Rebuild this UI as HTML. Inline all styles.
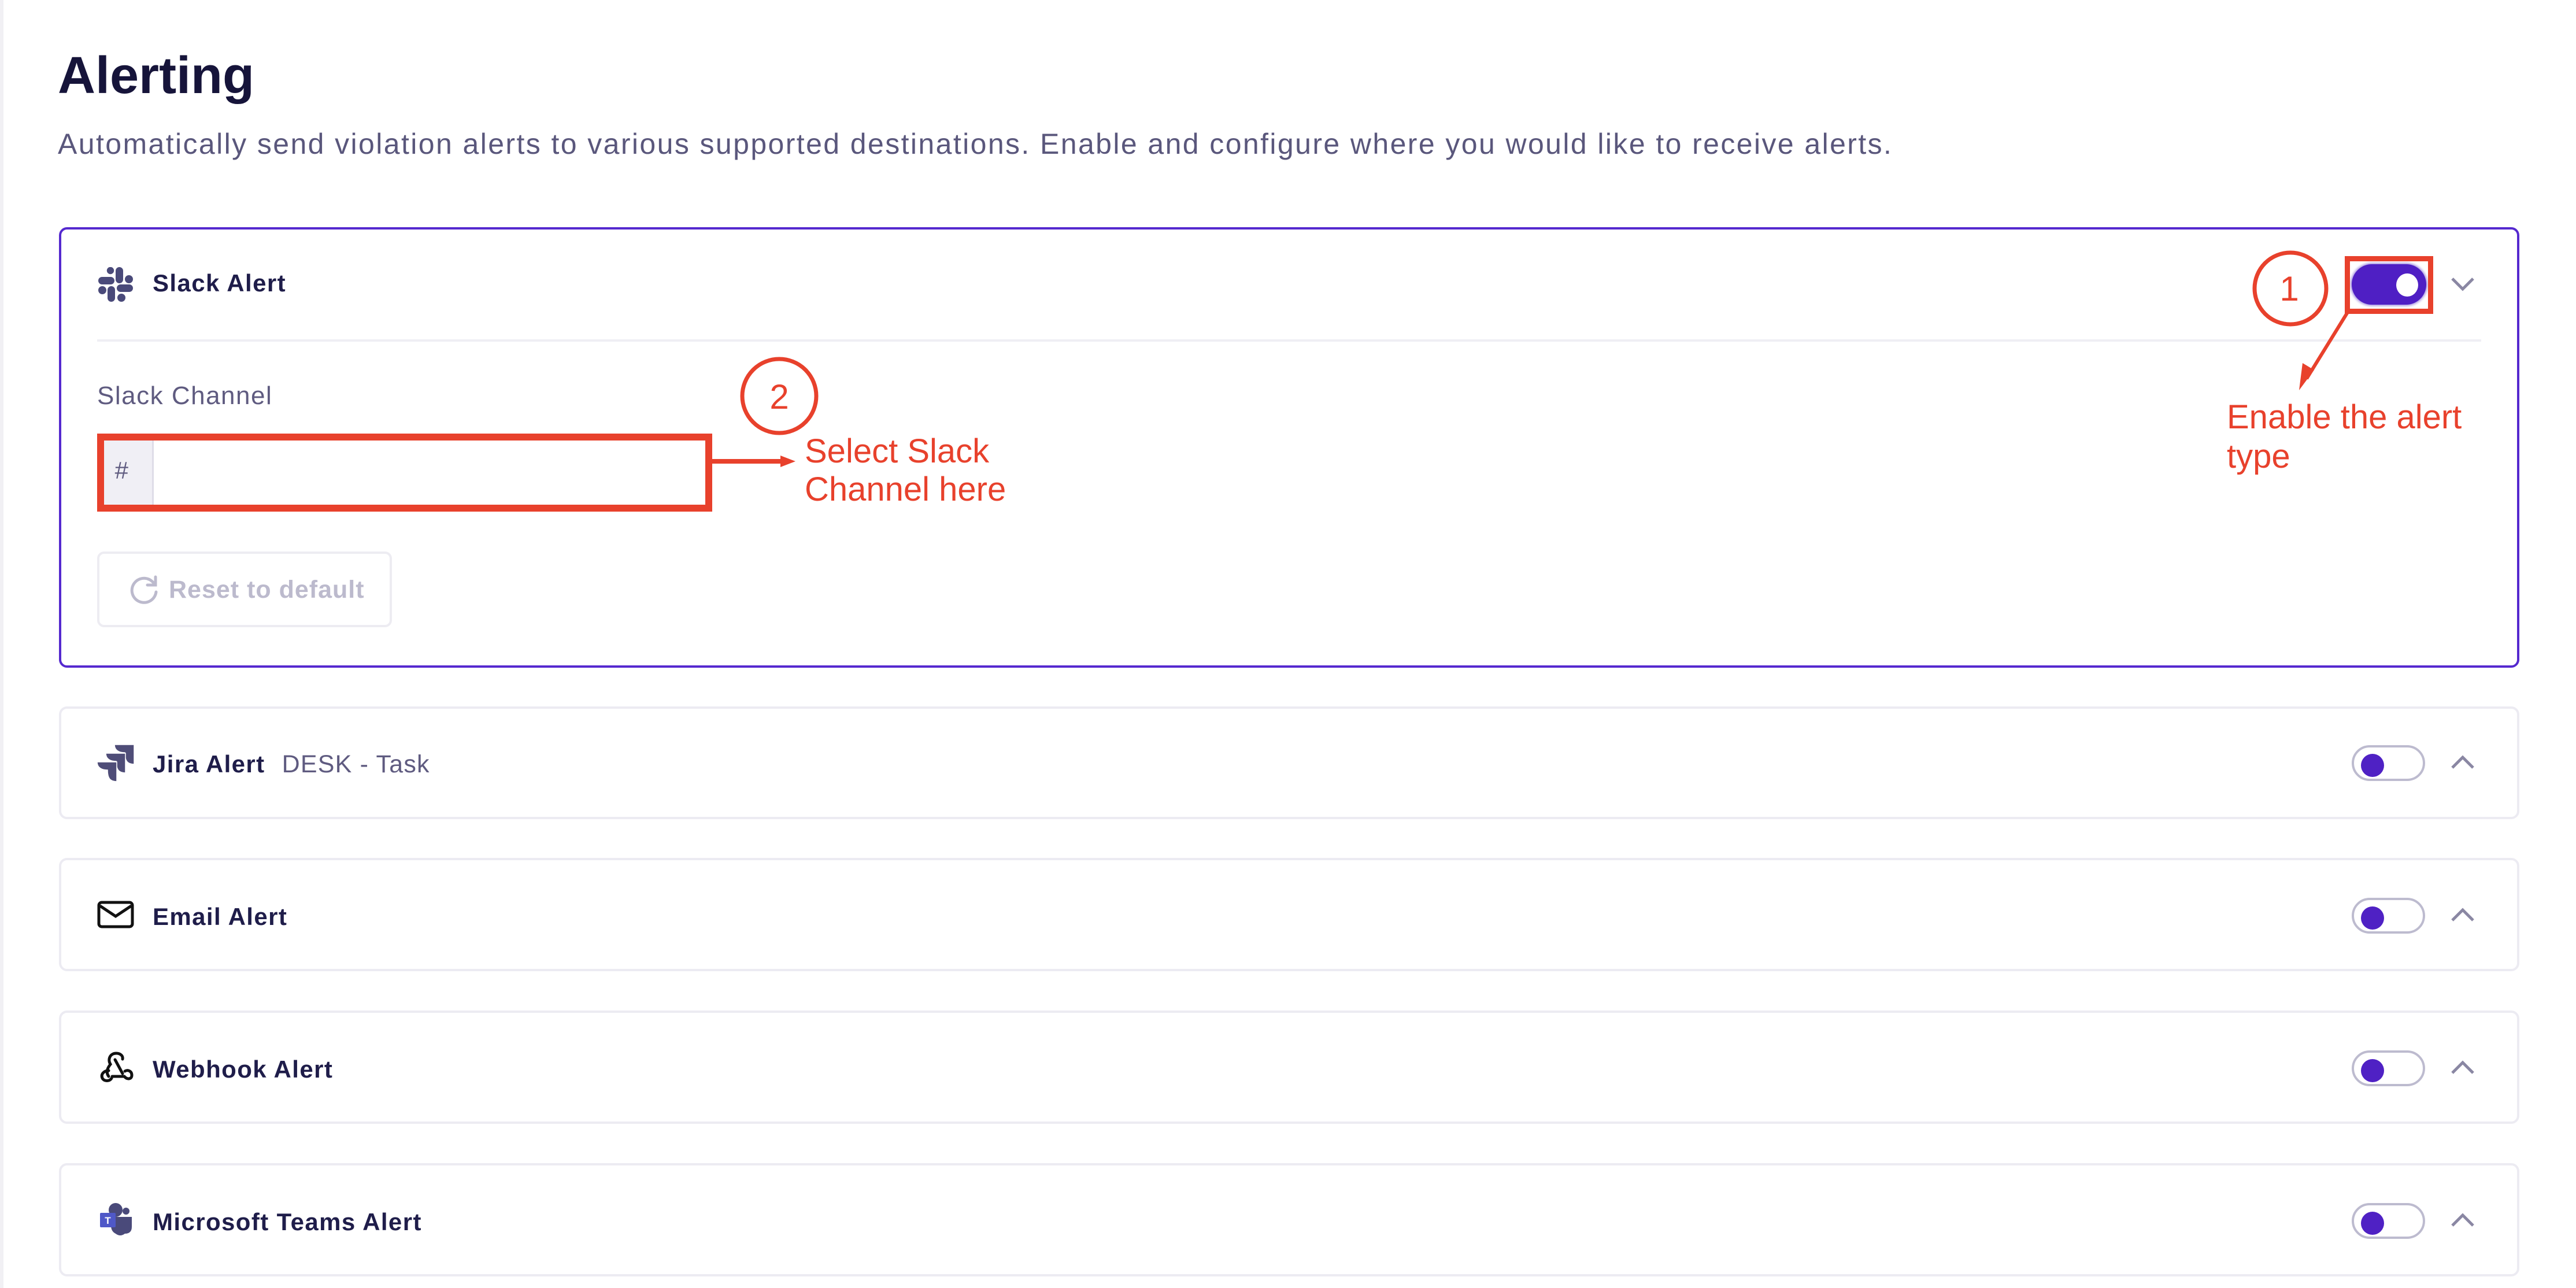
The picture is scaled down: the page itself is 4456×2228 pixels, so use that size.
<!DOCTYPE html>
<html><head><meta charset="utf-8">
<style>
*{margin:0;padding:0;box-sizing:border-box}
html,body{width:4456px;height:2228px;overflow:hidden;background:#fff;font-family:"Liberation Sans",Arial,sans-serif}
.abs{position:absolute}
.card{position:absolute;left:102px;width:4256px;border:4px solid #ecebf2;border-radius:14px;background:#fff}
.title{position:absolute;left:264px;font-size:42px;letter-spacing:1.4px;font-weight:bold;color:#1f1d4a;white-space:nowrap}
.sub{font-weight:normal;color:#5f5b80;font-size:43px;letter-spacing:1.2px}
.tog{position:absolute;left:4068px;width:127px;height:62px;border:4px solid #bdbbcf;border-radius:31px;background:#fff}
.tog i{position:absolute;left:12px;top:11px;width:40px;height:40px;border-radius:50%;background:#4f21c4}
.red{color:#e8412c;font-size:58px;line-height:66px;position:absolute;white-space:nowrap}
</style></head><body>
<div class="abs" style="left:0;top:0;width:6px;height:2228px;background:#f1f0f4"></div>
<div class="abs" style="left:100px;top:80px;font-size:90px;font-weight:bold;color:#16143a">Alerting</div>
<div class="abs" style="left:100px;top:220px;font-size:50px;letter-spacing:2.4px;color:#5a577c;white-space:nowrap">Automatically send violation alerts to various supported destinations. Enable and configure where you would like to receive alerts.</div>

<div class="abs" style="left:102px;top:393px;width:4256px;height:762px;border:4px solid #5529cf;border-radius:14px"></div>
<svg class="abs" style="left:170px;top:462px" width="60" height="60" viewBox="0 0 60 60" fill="#4a4a7a">
<rect x="30" y="0" width="13" height="28" rx="6.5"/><circle cx="21" cy="6" r="6.2"/>
<rect x="0" y="17" width="28" height="13" rx="6.5"/><circle cx="53" cy="21" r="7"/>
<rect x="32" y="30" width="28" height="13" rx="6.5"/><circle cx="7" cy="40" r="7"/>
<rect x="16" y="33" width="13" height="27" rx="6.5"/><circle cx="40" cy="53" r="7"/>
</svg>
<div class="title" style="top:466px">Slack Alert</div>
<div class="abs" style="left:168px;top:587px;width:4124px;height:4px;background:#efeef4"></div>
<div class="abs" style="left:168px;top:660px;font-size:44px;letter-spacing:1.5px;color:#5f5b80">Slack Channel</div>
<div class="abs" style="left:174px;top:756px;width:92px;height:124px;background:#f0eff5;border-right:3px solid #dedce8"></div>
<div class="abs" style="left:198px;top:790px;font-size:42px;color:#5f5b80;font-style:italic">#</div>
<div class="abs" style="left:168px;top:750px;width:1064px;height:135px;border:12px solid #e8412c"></div>
<svg class="abs" style="left:1220px;top:780px" width="160" height="40"><line x1="0" y1="18" x2="140" y2="18" stroke="#e8412c" stroke-width="8"/><polygon points="130,8 156,18 130,28" fill="#e8412c"/></svg>
<svg class="abs" style="left:1276px;top:615px" width="144" height="140"><ellipse cx="72" cy="70" rx="64" ry="64" fill="none" stroke="#e8412c" stroke-width="7"/><text x="72" y="92" text-anchor="middle" font-family="Liberation Sans" font-size="60" fill="#e8412c">2</text></svg>
<div class="red" style="left:1392px;top:748px">Select Slack<br>Channel here</div>
<div class="abs" style="left:168px;top:954px;width:510px;height:131px;border:4px solid #edecf2;border-radius:12px"></div>
<svg class="abs" style="left:222px;top:992px" width="56" height="56" viewBox="0 0 56 56" fill="none" stroke="#bcbacd" stroke-width="5" stroke-linecap="round"><path d="M46 20 A21 21 0 1 0 48 32"/><path d="M47 6 V20 H33"/></svg>
<div class="abs" style="left:292px;top:996px;font-size:43px;letter-spacing:1px;font-weight:bold;color:#bcbacd">Reset to default</div>
<div class="abs" style="left:4068px;top:457px;width:129px;height:70px;border-radius:35px;background:#4f1fc4;box-shadow:0 0 4px 2px #a28ee0"></div>
<div class="abs" style="left:4145px;top:473px;width:38px;height:40px;border-radius:50%;background:#fff"></div>
<div class="abs" style="left:4056px;top:443px;width:153px;height:100px;border:9px solid #e8412c"></div>
<svg class="abs" style="left:4238px;top:476px" width="44" height="30"><polyline points="4,6 22,24 40,6" fill="none" stroke="#8a87a3" stroke-width="5"/></svg>
<svg class="abs" style="left:3895px;top:430px" width="180" height="260"><ellipse cx="67" cy="69" rx="62" ry="62" fill="none" stroke="#e8412c" stroke-width="7"/><text x="65" y="90" text-anchor="middle" font-family="Liberation Sans" font-size="60" fill="#e8412c">1</text><line x1="166" y1="110" x2="95" y2="225" stroke="#e8412c" stroke-width="6"/><polygon points="82,245 88,198 108,210" fill="#e8412c"/></svg>
<div class="red" style="left:3852px;top:688px;font-size:58px;line-height:68px">Enable the alert<br>type</div>

<div class="card" style="top:1222px;height:195px"></div>
<div class="card" style="top:1484px;height:196px"></div>
<div class="card" style="top:1748px;height:196px"></div>
<div class="card" style="top:2012px;height:196px"></div>

<svg class="abs" style="left:160px;top:1280px" width="80" height="80" fill="#4f4d78" stroke="#fff" stroke-width="1.5">
<path d="M38 8H72V42C60 42 56 36 56 22C46 22 38 18 38 8Z"/>
<path d="M23 23H57V57C45 57 41 51 41 37C31 37 23 33 23 23Z"/>
<path d="M8 38H42V72C30 72 26 66 26 52C16 52 8 48 8 38Z"/></svg>
<div class="title" style="top:1298px">Jira Alert <span class="sub" style="margin-left:16px">DESK - Task</span></div>

<svg class="abs" style="left:168px;top:1558px" width="64" height="50"><rect x="3" y="3" width="58" height="42" rx="5" fill="none" stroke="#111" stroke-width="5"/><polyline points="5,9 32,27 59,9" fill="none" stroke="#111" stroke-width="5"/></svg>
<div class="title" style="top:1562px">Email Alert</div>

<svg class="abs" style="left:160px;top:1800px" width="80" height="80" viewBox="0 0 80 80" fill="none" stroke="#111" stroke-width="5" stroke-linecap="round">
<path d="M28 62 C22 54 27 46 31 41 C26 33 30 22 41 22 C49 22 53 27 52 32"/>
<path d="M39 33 L52 57"/>
<path d="M34 62 H55 C60 68 68 67 68 60 C68 52 60 50 56 53"/>
<path d="M28 52 C20 52 14 58 17 65 C20 71 30 71 33 65"/>
</svg>
<div class="title" style="top:1826px">Webhook Alert</div>

<svg class="abs" style="left:160px;top:2070px" width="80" height="80" viewBox="0 0 80 80">
<circle cx="40" cy="23" r="12" fill="#4a4a7a"/><circle cx="58" cy="25" r="6" fill="#4a4a7a"/>
<path d="M32 35H68V52Q68 64 56 64Q48 70 40 64Q32 60 32 50Z" fill="#4a4a7a"/>
<rect x="13" y="28" width="27" height="25" rx="2" fill="#4f58c8"/>
<text x="26.5" y="47" text-anchor="middle" font-family="Liberation Sans" font-weight="bold" font-size="17" fill="#fff">T</text></svg>
<div class="title" style="top:2090px">Microsoft Teams Alert</div>

<div class="tog" style="top:1289px"><i></i></div>
<div class="tog" style="top:1553px"><i></i></div>
<div class="tog" style="top:1817px"><i></i></div>
<div class="tog" style="top:2081px"><i></i></div>
<svg class="abs" style="left:4238px;top:1304px" width="44" height="30"><polyline points="4,24 22,6 40,24" fill="none" stroke="#8a87a3" stroke-width="5"/></svg>
<svg class="abs" style="left:4238px;top:1568px" width="44" height="30"><polyline points="4,24 22,6 40,24" fill="none" stroke="#8a87a3" stroke-width="5"/></svg>
<svg class="abs" style="left:4238px;top:1832px" width="44" height="30"><polyline points="4,24 22,6 40,24" fill="none" stroke="#8a87a3" stroke-width="5"/></svg>
<svg class="abs" style="left:4238px;top:2096px" width="44" height="30"><polyline points="4,24 22,6 40,24" fill="none" stroke="#8a87a3" stroke-width="5"/></svg>
</body></html>
